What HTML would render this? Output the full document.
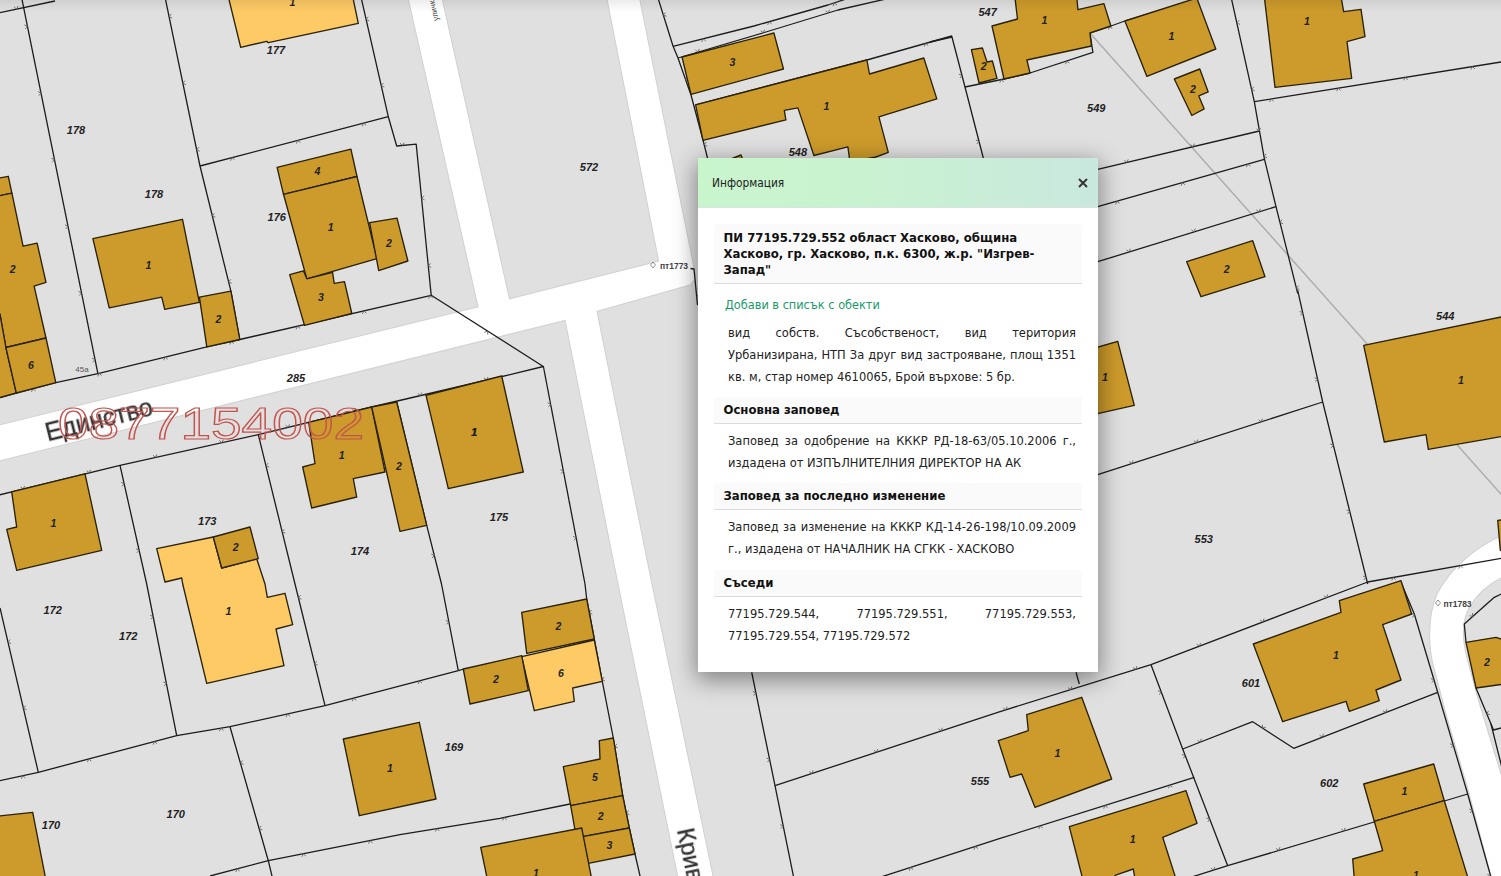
<!DOCTYPE html>
<html lang="bg">
<head>
<meta charset="utf-8">
<title>Кадастрална карта</title>
<style>
html,body{margin:0;padding:0;background:#e0e0e0;}
body{width:1501px;height:876px;overflow:hidden;position:relative;font-family:"DejaVu Sans Condensed","DejaVu Sans","Liberation Sans",sans-serif;font-stretch:condensed;}
#map{position:absolute;left:0;top:0;width:1501px;height:876px;display:block;}
#map text{font-family:"Liberation Sans",sans-serif;}
.lbl{font-weight:bold;font-style:italic;font-size:11px;fill:#222;text-anchor:middle;}
.bn{font-weight:bold;font-style:italic;font-size:10.5px;fill:#222;text-anchor:middle;}
.ln{fill:none;stroke:#1c1c1c;stroke-width:1.3;stroke-linejoin:round;}
.bd{fill:#cd9b2b;stroke:#2a2208;stroke-width:1.35;stroke-linejoin:round;}
.bl{fill:#fdca65;stroke:#2a2208;stroke-width:1.35;stroke-linejoin:round;}
.tk{fill:none;stroke:#666;stroke-width:0.9;}
.gl{fill:none;stroke:#adadad;stroke-width:1.5;}
#topshade{position:absolute;left:0;top:0;width:1501px;height:12px;background:linear-gradient(to bottom,rgba(0,0,0,0.075),rgba(0,0,0,0));}
#win{position:absolute;left:698px;top:158px;width:400px;height:514px;background:#fff;box-shadow:0 6px 22px 2px rgba(0,0,0,0.42);}
#hd{position:absolute;left:0;top:0;width:400px;height:50px;background:linear-gradient(to right,#c9f5cd 0%,#c9f3cf 35%,#c9e8de 100%);border-bottom:1px solid #d5e6dc;box-sizing:border-box;}
#hd .t{position:absolute;left:14px;top:17px;font-size:11.8px;line-height:16px;color:#222;}
#hd .x{position:absolute;left:379px;top:19px;width:12px;height:12px;}
.sh{position:absolute;left:16px;width:368px;box-sizing:border-box;background:#fafafa;border-bottom:1px solid #dcdcdc;border-radius:3px 3px 0 0;font-weight:bold;font-size:13px;color:#111;padding-left:9.5px;}
.p{position:absolute;left:30px;width:348px;font-size:12.75px;line-height:22px;color:#222;white-space:nowrap;}
.p div{height:22px;}
.p .j{text-align:justify;text-align-last:justify;}
#lnk{position:absolute;left:27px;top:139px;font-size:12.6px;line-height:16px;color:#1a9a6b;white-space:nowrap;}
</style>
</head>
<body>
<svg id="map" width="1501" height="876" viewBox="0 0 1501 876">
<defs>
<filter id="soft" x="-5%" y="-5%" width="110%" height="110%"><feGaussianBlur stdDeviation="0.55"/></filter>
</defs>
<rect x="0" y="0" width="1501" height="876" fill="#e0e0e0"/>
<!-- roads -->
<g id="roads" fill="#ffffff" stroke="#d2d2d2" stroke-width="1.1" filter="url(#soft)">
<polygon points="408,-2 442,-2 509.5,298.8 658.6,261.1 606.7,-2 639.5,-2 695.3,274 694.5,280 690,285 597,311.5 652,584 713.5,878 678,878 618,584 565,320.5 -2,461.2 -2,425.2 478,306.8"/>
<path d="M1503,535 C1476,547 1450,568 1437,594 C1427,617 1428,650 1435,672 L1447,718 L1467,786 L1491.5,878 L1510,878 L1510,780 L1501,774 L1479,702 L1467,658 C1461,634 1463,620 1469,608 C1477,594 1488,584 1503,577 Z"/>
</g>
<g id="glines" filter="url(#soft)"><polyline class="gl" points="1089.9,33.0 1505.0,498.5"/></g>
<g id="lines"><polyline class="ln" points="0.0,12.7 55.0,1.0"/>
<polyline class="ln" points="21.5,-3.0 97.9,373.6"/>
<polyline class="ln" points="165.0,-3.0 200.0,166.0 230.9,291.2 239.8,339.5"/>
<polyline class="ln" points="200.0,166.0 388.3,116.7"/>
<polyline class="ln" points="361.0,-3.0 388.3,116.7 396.7,146.0 416.2,144.2 431.2,295.3"/>
<polyline class="ln" points="-2.0,398.0 55.8,382.6 97.9,373.6 206.8,346.9 239.8,339.5 431.2,295.3 543.3,366.5"/>
<polyline class="ln" points="-2.0,495.2 120.0,465.3 258.3,434.7 371.7,407.0 500.0,377.0 543.3,366.5"/>
<polyline class="ln" points="543.3,366.0 585.0,584.0"/>
<polyline class="ln" points="585.0,584.0 586.7,599.0 594.3,639.0 602.3,681.3 613.3,738.0 622.7,795.7 629.3,828.0 635.0,854.0 640.7,879.0"/>
<polyline class="ln" points="120.0,465.3 146.7,584.0 176.7,735.7"/>
<polyline class="ln" points="258.3,434.7 295.0,584.0 325.0,705.7"/>
<polyline class="ln" points="396.7,402.0 426.7,525.3 441.5,584.0 458.3,670.7"/>
<polyline class="ln" points="0.0,608.0 38.3,772.3"/>
<polyline class="ln" points="-1.7,781.0 38.3,772.3 176.7,735.7 230.0,726.7 325.0,705.7 458.3,670.7 464.0,669.0"/>
<polyline class="ln" points="230.0,726.7 268.3,860.7 272.7,879.0"/>
<polyline class="ln" points="210.0,876.0 268.3,860.7 400.0,834.7 500.0,818.3 570.0,804.0"/>
<polyline class="ln" points="658.0,-2.0 673.0,46.0 678.0,58.0 691.0,95.0 703.0,140.0 708.0,160.0"/>
<polyline class="ln" points="673.0,46.4 754.0,26.0 827.9,5.0 846.0,-1.0"/>
<polyline class="ln" points="678.0,58.0 765.9,32.0 837.9,10.0 885.9,-1.0"/>
<polyline class="ln" points="695.6,104.9 866.9,60.0 951.7,36.0 965.0,87.0 983.3,158.0"/>
<polyline class="ln" points="930.0,42.0 952.0,37.0"/>
<polyline class="ln" points="965.0,87.0 1004.0,79.0 1030.0,73.0 1092.9,52.4 1089.9,33.0 1110.9,26.0 1124.9,21.0 1196.8,-1.0"/>
<polyline class="ln" points="1231.0,-3.3 1254.3,101.7 1264.3,158.3 1276.0,206.7 1297.7,293.3"/>
<polyline class="ln" points="1254.3,101.7 1502.7,61.7"/>
<polyline class="ln" points="1097.7,169.3 1259.3,131.0"/>
<polyline class="ln" points="1097.7,206.7 1264.3,159.3"/>
<polyline class="ln" points="1097.7,261.7 1276.0,206.7"/>
<polyline class="ln" points="1297.7,290.3 1322.7,402.0 1367.7,584.0"/>
<polyline class="ln" points="1097.7,474.7 1322.7,402.0"/>
<polyline class="ln" points="1367.7,582.0 1502.7,558.0"/>
<polyline class="ln" points="775.0,785.7 999.3,711.8 1151.0,664.7 1367.7,582.0"/>
<polyline class="ln" points="1151.0,664.7 1182.7,749.0 1227.7,865.7"/>
<polyline class="ln" points="1182.7,749.0 1252.7,721.7 1293.7,748.3 1437.7,692.3"/>
<polyline class="ln" points="880.0,877.3 999.3,838.7 1194.3,777.3"/>
<polyline class="ln" points="1192.7,876.7 1227.7,865.7 1467.7,794.0"/>
<polyline class="ln" points="1401.0,582.3 1414.3,614.0 1437.7,692.3 1467.7,794.0 1491.0,877.3"/>
<polyline class="ln" points="1076.0,672.3 1079.3,684.0"/>
<polyline class="ln" points="1502.7,593.3 1494.3,597.3 1464.3,624.0 1466.0,642.3"/>
<polyline class="ln" points="1476.0,688.0 1491.0,724.0 1502.7,770.7"/>
<polyline class="ln" points="1491.0,724.0 1493.5,730.0 1503.0,727.5"/>
<polyline class="ln" points="690.5,268.5 694.0,269.0 697.5,305.0"/>
<polyline class="ln" points="751.7,672.3 775.0,785.7 794.0,879.0"/></g>
<g id="ticks"><path class="tk" d="M16.6,9.1 L18.1,6.1 M16.6,9.1 L14.1,6.9"/>
<path class="tk" d="M27.5,26.4 L25.2,28.9 M27.5,26.4 L24.4,24.9 M41.0,93.0 L38.7,95.6 M41.0,93.0 L37.9,91.6 M54.5,159.7 L52.2,162.2 M54.5,159.7 L51.4,158.2 M68.0,226.3 L65.8,228.9 M68.0,226.3 L65.0,224.9 M81.5,293.0 L79.3,295.5 M81.5,293.0 L78.5,291.5 M95.1,359.6 L92.8,362.2 M95.1,359.6 L92.0,358.2"/>
<path class="tk" d="M169.1,16.6 L172.1,18.0 M169.1,16.6 L171.3,14.0 M182.8,83.2 L185.9,84.6 M182.8,83.2 L185.1,80.6 M196.6,149.8 L199.7,151.2 M196.6,149.8 L198.9,147.2 M212.3,215.9 L215.4,217.2 M212.3,215.9 L214.5,213.3 M228.6,281.9 L231.7,283.3 M228.6,281.9 L230.8,279.3"/>
<path class="tk" d="M231.9,157.6 L234.6,159.8 M231.9,157.6 L230.6,160.8 M297.7,140.4 L300.4,142.5 M297.7,140.4 L296.4,143.6 M363.5,123.2 L366.2,125.3 M363.5,123.2 L362.2,126.3"/>
<path class="tk" d="M366.1,19.4 L369.2,20.8 M366.1,19.4 L368.3,16.8 M381.2,85.7 L384.3,87.1 M381.2,85.7 L383.4,83.1 M402.4,145.5 L404.2,142.6 M402.4,145.5 L400.1,143.0 M421.6,198.1 L424.5,199.9 M421.6,198.1 L424.1,195.8 M428.3,265.8 L431.2,267.5 M428.3,265.8 L430.8,263.5"/>
<path class="tk" d="M32.8,388.7 L35.5,390.8 M32.8,388.7 L31.5,391.9 M99.0,373.3 L101.6,375.5 M99.0,373.3 L97.7,376.5 M165.0,357.1 L167.7,359.3 M165.0,357.1 L163.7,360.3 M231.2,341.4 L233.8,343.6 M231.2,341.4 L229.8,344.5 M297.5,326.2 L300.1,328.4 M297.5,326.2 L296.1,329.3 M363.7,310.9 L366.3,313.1 M363.7,310.9 L362.4,314.0 M430.0,295.6 L432.6,297.8 M430.0,295.6 L428.6,298.7 M487.5,331.1 L487.8,334.5 M487.5,331.1 L484.4,332.3"/>
<path class="tk" d="M23.3,489.0 L24.6,485.9 M23.3,489.0 L20.6,486.9 M89.3,472.8 L90.6,469.7 M89.3,472.8 L86.7,470.7 M155.5,457.4 L156.9,454.3 M155.5,457.4 L153.0,455.2 M221.9,442.7 L223.3,439.7 M221.9,442.7 L219.3,440.5 M288.2,427.4 L289.5,424.3 M288.2,427.4 L285.5,425.2 M354.2,411.3 L355.6,408.1 M354.2,411.3 L351.6,409.1 M420.4,395.6 L421.8,392.5 M420.4,395.6 L417.8,393.4 M486.6,380.1 L488.0,377.0 M486.6,380.1 L484.0,377.9"/>
<path class="tk" d="M550.7,404.3 L548.4,406.8 M550.7,404.3 L547.6,402.8 M563.4,471.1 L561.1,473.6 M563.4,471.1 L560.4,469.6 M576.2,537.9 L573.9,540.4 M576.2,537.9 L573.1,536.4"/>
<path class="tk" d="M589.3,612.7 L592.3,614.2 M589.3,612.7 L591.6,610.1 M602.0,679.5 L605.0,681.0 M602.0,679.5 L604.3,677.0 M614.7,746.3 L617.7,747.8 M614.7,746.3 L617.0,743.8 M626.3,813.3 L629.4,814.7 M626.3,813.3 L628.5,810.7"/>
<path class="tk" d="M124.2,483.8 L122.0,486.4 M124.2,483.8 L121.1,482.4 M139.1,550.2 L136.9,552.8 M139.1,550.2 L136.0,548.8 M153.2,616.7 L150.9,619.2 M153.2,616.7 L150.1,615.2 M166.4,683.4 L164.1,685.9 M166.4,683.4 L163.3,681.9"/>
<path class="tk" d="M265.9,465.8 L269.1,467.1 M265.9,465.8 L268.1,463.1 M282.2,531.8 L285.3,533.1 M282.2,531.8 L284.3,529.2 M298.4,597.8 L301.5,599.2 M298.4,597.8 L300.6,595.2 M314.7,663.9 L317.8,665.2 M314.7,663.9 L316.8,661.2"/>
<path class="tk" d="M401.9,423.4 L399.7,426.0 M401.9,423.4 L398.8,422.0 M418.0,489.4 L415.8,492.1 M418.0,489.4 L414.9,488.1 M434.3,555.5 L432.2,558.1 M434.3,555.5 L431.2,554.1 M448.8,621.9 L446.6,624.4 M448.8,621.9 L445.8,620.4"/>
<path class="tk" d="M8.0,642.1 L11.1,643.5 M8.0,642.1 L10.1,639.5 M23.4,708.3 L26.5,709.7 M23.4,708.3 L25.6,705.7"/>
<path class="tk" d="M22.8,775.7 L25.3,777.9 M22.8,775.7 L21.3,778.8 M88.7,759.0 L91.3,761.1 M88.7,759.0 L87.4,762.1 M154.4,741.6 L157.1,743.7 M154.4,741.6 L153.1,744.7 M221.0,728.2 L223.5,730.5 M221.0,728.2 L219.4,731.2 M287.5,714.0 L290.1,716.2 M287.5,714.0 L286.1,717.1 M353.6,698.2 L356.3,700.3 M353.6,698.2 L352.3,701.3 M419.4,680.9 L422.0,683.0 M419.4,680.9 L418.1,684.0"/>
<path class="tk" d="M240.5,763.2 L243.6,764.4 M240.5,763.2 L242.5,760.5 M259.2,828.6 L262.3,829.8 M259.2,828.6 L261.2,825.9"/>
<path class="tk" d="M237.1,868.9 L239.7,871.0 M237.1,868.9 L235.8,872.0 M303.3,853.8 L305.9,856.1 M303.3,853.8 L301.9,856.8 M370.1,840.6 L372.6,842.9 M370.1,840.6 L368.6,843.7 M437.0,828.6 L439.4,831.0 M437.0,828.6 L435.4,831.6 M504.1,817.5 L506.6,819.7 M504.1,817.5 L502.6,820.5"/>
<path class="tk" d="M663.4,15.2 L666.6,16.3 M663.4,15.2 L665.4,12.4 M685.5,79.4 L688.8,80.4 M685.5,79.4 L687.4,76.6 M704.2,144.8 L707.3,146.1 M704.2,144.8 L706.3,142.1"/>
<path class="tk" d="M703.1,38.8 L705.7,41.0 M703.1,38.8 L701.7,42.0 M768.9,21.8 L771.6,23.8 M768.9,21.8 L767.7,24.9 M834.2,2.9 L837.0,4.8 M834.2,2.9 L833.1,6.1"/>
<path class="tk" d="M698.1,52.0 L699.3,48.9 M698.1,52.0 L695.4,50.0 M763.3,32.8 L764.5,29.6 M763.3,32.8 L760.6,30.7 M828.4,12.9 L829.5,9.7 M828.4,12.9 L825.6,10.9"/>
<path class="tk" d="M728.5,96.3 L731.2,98.4 M728.5,96.3 L727.2,99.4 M794.3,79.0 L796.9,81.2 M794.3,79.0 L793.0,82.2 M860.0,61.8 L862.7,63.9 M860.0,61.8 L858.8,64.9 M925.5,43.4 L928.2,45.5 M925.5,43.4 L924.3,46.6 M962.0,75.5 L959.9,78.1 M962.0,75.5 L958.8,74.2 M979.0,141.3 L976.9,144.0 M979.0,141.3 L975.9,140.0"/>
<path class="tk" d="M1001.2,79.6 L1003.8,81.8 M1001.2,79.6 L999.8,82.6 M1066.6,61.0 L1069.4,63.0 M1066.6,61.0 L1065.5,64.2 M1109.5,26.5 L1112.3,28.4 M1109.5,26.5 L1108.4,29.7 M1174.3,5.9 L1177.1,7.9 M1174.3,5.9 L1173.2,9.1"/>
<path class="tk" d="M1236.9,23.0 L1240.0,24.4 M1236.9,23.0 L1239.1,20.4 M1251.6,89.4 L1254.7,90.8 M1251.6,89.4 L1253.8,86.8 M1264.0,156.3 L1267.0,157.8 M1264.0,156.3 L1266.3,153.8 M1279.9,222.4 L1283.1,223.7 M1279.9,222.4 L1282.1,219.7 M1296.4,288.3 L1299.5,289.6 M1296.4,288.3 L1298.6,285.7"/>
<path class="tk" d="M1271.1,99.0 L1273.6,101.3 M1271.1,99.0 L1269.5,102.0 M1338.3,88.1 L1340.7,90.5 M1338.3,88.1 L1336.7,91.2 M1405.4,77.3 L1407.8,79.7 M1405.4,77.3 L1403.8,80.3 M1472.5,66.5 L1475.0,68.9 M1472.5,66.5 L1470.9,69.5"/>
<path class="tk" d="M1126.9,162.4 L1128.2,159.3 M1126.9,162.4 L1124.2,160.2 M1193.0,146.7 L1194.4,143.6 M1193.0,146.7 L1190.4,144.5 M1259.2,131.0 L1260.5,127.9 M1259.2,131.0 L1256.6,128.9"/>
<path class="tk" d="M1116.9,201.2 L1119.6,203.3 M1116.9,201.2 L1115.7,204.4 M1182.3,182.6 L1185.0,184.7 M1182.3,182.6 L1181.1,185.8 M1247.7,164.0 L1250.4,166.1 M1247.7,164.0 L1246.5,167.2"/>
<path class="tk" d="M1129.2,251.9 L1130.3,248.7 M1129.2,251.9 L1126.4,249.9 M1194.2,231.9 L1195.3,228.7 M1194.2,231.9 L1191.4,229.9 M1259.2,211.9 L1260.3,208.7 M1259.2,211.9 L1256.4,209.9"/>
<path class="tk" d="M1302.7,312.8 L1300.5,315.4 M1302.7,312.8 L1299.6,311.4 M1317.5,379.1 L1315.3,381.7 M1317.5,379.1 L1314.4,377.7 M1333.4,445.3 L1331.2,447.9 M1333.4,445.3 L1330.2,443.9 M1349.7,511.3 L1347.5,513.9 M1349.7,511.3 L1346.6,510.0 M1366.0,577.3 L1363.9,579.9 M1366.0,577.3 L1362.9,576.0"/>
<path class="tk" d="M1131.9,463.6 L1133.0,460.4 M1131.9,463.6 L1129.1,461.6 M1196.6,442.7 L1197.7,439.5 M1196.6,442.7 L1193.9,440.7 M1261.3,421.8 L1262.4,418.6 M1261.3,421.8 L1258.6,419.8"/>
<path class="tk" d="M1393.3,577.4 L1395.7,579.8 M1393.3,577.4 L1391.7,580.5 M1460.2,565.5 L1462.7,567.9 M1460.2,565.5 L1458.7,568.6"/>
<path class="tk" d="M812.0,773.5 L813.1,770.3 M812.0,773.5 L809.3,771.6 M876.6,752.2 L877.7,749.0 M876.6,752.2 L873.8,750.3 M941.2,730.9 L942.3,727.7 M941.2,730.9 L938.4,729.0 M1005.8,709.8 L1007.0,706.6 M1005.8,709.8 L1003.1,707.8 M1070.8,689.6 L1071.9,686.4 M1070.8,689.6 L1068.0,687.6 M1135.7,669.4 L1136.9,666.2 M1135.7,669.4 L1133.0,667.5 M1199.6,646.2 L1200.5,642.9 M1199.6,646.2 L1196.7,644.3 M1263.1,621.9 L1264.0,618.6 M1263.1,621.9 L1260.2,620.1 M1326.6,597.7 L1327.6,594.4 M1326.6,597.7 L1323.8,595.9"/>
<path class="tk" d="M1161.2,691.8 L1159.4,694.7 M1161.2,691.8 L1157.9,690.9 M1185.2,755.5 L1183.4,758.3 M1185.2,755.5 L1181.9,754.5 M1209.6,818.9 L1207.8,821.8 M1209.6,818.9 L1206.4,818.0"/>
<path class="tk" d="M1200.4,742.1 L1201.3,738.8 M1200.4,742.1 L1197.5,740.3 M1262.6,728.1 L1265.8,727.0 M1262.6,728.1 L1262.4,724.7 M1322.5,737.1 L1323.4,733.8 M1322.5,737.1 L1319.6,735.3 M1385.9,712.5 L1386.8,709.2 M1385.9,712.5 L1383.0,710.7"/>
<path class="tk" d="M910.4,867.4 L913.2,869.4 M910.4,867.4 L909.3,870.7 M975.1,846.5 L977.9,848.5 M975.1,846.5 L974.0,849.7 M1039.9,825.9 L1042.7,827.9 M1039.9,825.9 L1038.8,829.1 M1104.8,805.5 L1107.6,807.5 M1104.8,805.5 L1103.7,808.7 M1169.7,785.1 L1172.4,787.0 M1169.7,785.1 L1168.5,788.3"/>
<path class="tk" d="M1213.7,870.1 L1214.8,866.9 M1213.7,870.1 L1210.9,868.1 M1278.7,850.4 L1279.9,847.2 M1278.7,850.4 L1276.0,848.4 M1343.9,831.0 L1345.1,827.8 M1343.9,831.0 L1341.2,828.9 M1409.1,811.5 L1410.2,808.3 M1409.1,811.5 L1406.3,809.5"/>
<path class="tk" d="M1414.5,614.6 L1412.5,617.3 M1414.5,614.6 L1411.3,613.4 M1433.9,679.8 L1431.9,682.5 M1433.9,679.8 L1430.7,678.6 M1453.2,745.0 L1451.2,747.7 M1453.2,745.0 L1450.0,743.8 M1472.2,810.3 L1470.2,813.0 M1472.2,810.3 L1469.1,809.0 M1490.6,875.8 L1488.5,878.5 M1490.6,875.8 L1487.4,874.5"/>
<path class="tk" d="M1472.8,616.4 L1469.5,615.8 M1472.8,616.4 L1472.6,613.0"/>
<path class="tk" d="M1486.8,713.8 L1490.1,714.7 M1486.8,713.8 L1488.5,710.9"/>
<path class="tk" d="M696.7,296.3 L699.6,298.1 M696.7,296.3 L699.2,294.0"/>
<path class="tk" d="M755.9,692.9 L753.6,695.4 M755.9,692.9 L752.8,691.5 M769.6,759.5 L767.4,762.1 M769.6,759.5 L766.5,758.1 M783.2,826.1 L781.0,828.7 M783.2,826.1 L780.2,824.7"/></g>
<g id="bldg"><polygon class="bl" points="228.3,-3.3 352.7,-3.3 358.3,23.3 268.3,42.7 266.7,41.3 240.7,47.3"/>
<polygon class="bd" points="277.1,167.4 350.9,149.1 357.0,176.5 283.5,194.3"/>
<polygon class="bd" points="283.5,194.3 357.0,176.5 376.9,258.7 306.8,278.8"/>
<polygon class="bd" points="369.6,222.6 397.0,218.1 407.9,261.0 378.7,270.6"/>
<polygon class="bd" points="289.7,274.7 303.4,270.8 306.8,278.8 332.6,272.4 334.2,283.4 344.5,281.6 351.8,313.5 304.5,325.4"/>
<polygon class="bd" points="-3.0,178.4 8.3,176.3 11.9,193.2 -3.0,196.2"/>
<polygon class="bd" points="-3.0,196.2 11.9,193.2 23.1,246.1 37.1,243.1 46.0,282.3 34.1,286.1 46.0,338.0 5.9,347.5 0.0,314.3 -3.0,314.9"/>
<polygon class="bd" points="-3.0,314.9 0.0,314.3 5.9,347.5 16.3,392.9 -3.0,398.3"/>
<polygon class="bd" points="5.9,347.5 46.0,338.0 55.8,382.6 16.3,392.9"/>
<polygon class="bd" points="92.9,238.6 182.5,219.3 199.4,302.4 164.7,309.3 161.7,297.1 109.2,307.8"/>
<polygon class="bd" points="199.4,297.1 230.9,291.2 239.8,339.5 206.8,346.9"/>
<polygon class="bd" points="11.7,491.8 85.0,473.9 101.7,550.3 16.7,570.3 6.7,529.3 16.7,527.0"/>
<polygon class="bd" points="308.7,422.3 371.7,407.0 385.0,472.0 353.3,478.7 356.7,497.0 311.7,508.0 302.7,467.0 315.0,463.7"/>
<polygon class="bd" points="371.7,407.0 396.7,402.0 426.7,525.3 400.0,531.3"/>
<polygon class="bd" points="426.0,395.3 501.7,376.0 523.3,472.0 448.3,488.7"/>
<polygon class="bl" points="156.7,548.7 213.3,537.0 221.7,568.0 256.7,558.7 265.0,584.0 267.3,597.3 285.0,593.3 292.7,624.7 276.0,629.0 284.0,665.7 206.7,683.3 182.7,584.0 181.7,578.0 165.0,582.0"/>
<polygon class="bd" points="213.3,537.0 250.0,527.0 258.3,558.7 221.7,568.0"/>
<polygon class="bd" points="343.3,739.0 419.3,722.3 436.0,799.0 359.3,815.7"/>
<polygon class="bd" points="-3.3,816.3 32.7,812.3 45.7,879.0 -3.3,879.0"/>
<polygon class="bd" points="521.7,612.3 586.7,599.0 594.3,639.0 526.7,653.3"/>
<polygon class="bl" points="521.7,656.7 594.3,640.0 602.3,681.3 572.7,688.0 574.3,701.3 534.3,710.7"/>
<polygon class="bd" points="463.3,669.0 521.7,655.7 528.3,690.7 470.0,704.0"/>
<polygon class="bd" points="563.3,766.7 600.0,759.0 599.3,740.7 613.3,738.0 622.7,795.7 570.7,805.7"/>
<polygon class="bd" points="570.7,805.7 622.7,795.7 629.3,828.0 582.7,836.7 581.7,829.0 575.0,830.0"/>
<polygon class="bd" points="582.7,836.7 629.3,828.0 635.0,854.0 588.3,863.3"/>
<polygon class="bd" points="480.7,847.3 581.7,828.0 591.7,879.0 487.3,879.0"/>
<polygon class="bd" points="682.0,57.0 773.9,33.0 783.5,69.0 691.0,94.3"/>
<polygon class="bd" points="695.6,104.9 866.9,60.0 869.5,74.0 923.8,58.0 936.8,98.9 878.9,116.9 888.3,152.3 876.0,157.0 849.9,162.0 847.9,146.9 813.9,155.5 797.9,107.9 784.3,110.3 785.9,119.9 703.0,140.3"/>
<polygon class="bd" points="731.0,159.0 741.0,155.0 743.0,160.0"/>
<polygon class="bd" points="992.0,26.0 1017.5,19.0 1015.0,-2.0 1076.9,-2.0 1077.9,9.6 1103.9,3.6 1110.9,26.0 1089.9,33.0 1091.5,46.0 1026.9,60.0 1030.0,73.0 1004.0,79.0"/>
<polygon class="bd" points="971.4,49.6 982.4,48.0 987.0,62.0 992.4,61.0 997.0,78.4 979.0,83.0"/>
<polygon class="bd" points="1124.9,21.0 1196.8,-2.0 1215.8,49.0 1146.9,76.4"/>
<polygon class="bd" points="1174.3,79.0 1199.8,69.0 1208.2,91.9 1198.8,95.9 1204.2,108.9 1191.8,115.5"/>
<polygon class="bd" points="1264.3,-3.3 1341.0,-3.3 1343.7,11.7 1361.0,9.3 1365.0,36.7 1347.0,41.7 1351.7,78.3 1275.0,87.3"/>
<polygon class="bd" points="1186.7,261.7 1252.7,240.7 1265.0,276.7 1201.0,296.7"/>
<polygon class="bd" points="1081.0,352.0 1117.7,341.3 1134.3,405.3 1097.7,413.7"/>
<polygon class="bd" points="1363.7,345.3 1504.3,316.3 1504.3,436.0 1428.3,449.3 1426.0,434.7 1384.3,442.0"/>
<polygon class="bd" points="1497.7,520.3 1504.3,519.7 1504.3,551.3 1500.3,550.3"/>
<polygon class="bd" points="1253.3,644.0 1341.0,612.3 1339.3,600.7 1401.0,580.7 1411.7,614.0 1382.7,624.7 1401.0,680.0 1376.0,690.0 1379.3,700.7 1349.3,711.3 1346.0,701.3 1282.7,721.7"/>
<polygon class="bd" points="1069.3,826.7 1186.0,790.7 1197.0,823.3 1162.7,837.3 1176.0,879.0 1135.0,879.0 1133.3,869.0 1115.0,875.3 1116.0,879.0 1082.7,879.0"/>
<polygon class="bd" points="1363.7,784.0 1433.7,764.0 1444.3,800.7 1374.3,821.3"/>
<polygon class="bd" points="1374.3,821.3 1444.3,800.7 1468.3,879.0 1354.3,879.0 1352.7,859.0 1382.7,850.7"/>
<polygon class="bd" points="1466.0,642.3 1496.0,637.3 1504.3,640.0 1504.3,684.0 1476.0,688.0"/>
<polygon class="bd" points="998.3,740.7 1028.3,730.7 1026.7,714.7 1081.7,697.3 1111.7,779.0 1035.0,807.3 1021.7,774.0 1010.0,777.3"/></g>
<g id="labels"><text class="lbl" x="276.0" y="54.3">177</text>
<text class="lbl" x="76.0" y="133.7">178</text>
<text class="lbl" x="154.0" y="198.0">178</text>
<text class="lbl" x="276.7" y="221.0">176</text>
<text class="bn" x="317.3" y="175.0">4</text>
<text class="bn" x="330.7" y="231.0">1</text>
<text class="bn" x="389.0" y="247.3">2</text>
<text class="bn" x="148.3" y="269.3">1</text>
<text class="bn" x="12.7" y="272.7">2</text>
<text class="bn" x="292.3" y="6.0">1</text>
<text class="lbl" x="296.0" y="381.7">285</text>
<text class="lbl" x="207.3" y="525.0">173</text>
<text class="lbl" x="360.0" y="555.0">174</text>
<text class="bn" x="53.3" y="527.0">1</text>
<text class="bn" x="341.7" y="459.3">1</text>
<text class="bn" x="399.0" y="470.3">2</text>
<text class="bn" x="474.3" y="436.0">1</text>
<text class="bn" x="235.7" y="551.3">2</text>
<text class="bn" x="321.0" y="301.3">3</text>
<text class="bn" x="218.3" y="323.0">2</text>
<text class="bn" x="31.0" y="369.3">6</text>
<text class="lbl" x="52.7" y="613.7">172</text>
<text class="lbl" x="128.3" y="640.3">172</text>
<text class="lbl" x="454.0" y="751.0">169</text>
<text class="lbl" x="175.7" y="817.7">170</text>
<text class="lbl" x="51.0" y="828.7">170</text>
<text class="bn" x="228.3" y="614.7">1</text>
<text class="bn" x="390.0" y="772.3">1</text>
<text class="bn" x="558.3" y="629.7">2</text>
<text class="bn" x="561.0" y="676.7">6</text>
<text class="bn" x="496.0" y="683.3">2</text>
<text class="bn" x="595.0" y="780.7">5</text>
<text class="bn" x="600.7" y="819.7">2</text>
<text class="bn" x="609.3" y="849.0">3</text>
<text class="bn" x="536.0" y="876.7">1</text>
<text class="bn" x="474.0" y="436.0">1</text>
<text class="lbl" x="499.0" y="520.7">175</text>
<text class="lbl" x="589.0" y="171.3">572</text>
<text class="lbl" x="797.9" y="156.0">548</text>
<text class="bn" x="732.3" y="66.0">3</text>
<text class="bn" x="826.3" y="109.5">1</text>
<text class="lbl" x="987.6" y="16.0">547</text>
<text class="bn" x="1044.3" y="24.0">1</text>
<text class="bn" x="983.6" y="70.0">2</text>
<text class="lbl" x="1096.3" y="111.5">549</text>
<text class="bn" x="1171.3" y="39.5">1</text>
<text class="bn" x="1192.8" y="93.0">2</text>
<text class="bn" x="1307.0" y="25.0">1</text>
<text class="bn" x="1226.7" y="273.3">2</text>
<text class="lbl" x="1445.3" y="319.7">544</text>
<text class="bn" x="1461.0" y="383.7">1</text>
<text class="lbl" x="1203.7" y="543.3">553</text>
<text class="bn" x="1105.0" y="381.3">1</text>
<text class="lbl" x="1251.0" y="686.7">601</text>
<text class="lbl" x="1329.3" y="786.7">602</text>
<text class="bn" x="1336.0" y="659.0">1</text>
<text class="bn" x="1132.7" y="843.3">1</text>
<text class="bn" x="1404.3" y="794.7">1</text>
<text class="bn" x="1487.0" y="665.7">2</text>
<text class="lbl" x="980.0" y="785.3">555</text>
<text class="bn" x="1057.3" y="756.7">1</text>
<text class="bn" x="1416.0" y="879.3">1</text></g>
<g id="extras">
<text x="82" y="372" font-size="8" fill="#555" text-anchor="middle">45а</text>
<text x="674" y="269" font-size="8.5" font-weight="bold" fill="#444" text-anchor="middle">пт1773</text>
<path d="M653,262 l2.5,3 l-2.5,3 l-2.5,-3 z" fill="none" stroke="#777" stroke-width="0.8"/>
<text x="1457.5" y="606.5" font-size="8.5" font-weight="bold" fill="#444" text-anchor="middle">пт1783</text>
<path d="M1438,600 l2.5,3 l-2.5,3 l-2.5,-3 z" fill="none" stroke="#777" stroke-width="0.8"/>
<text transform="translate(101,428) rotate(-14)" font-size="25" fill="#333" stroke="#333" stroke-width="0.35" text-anchor="middle" filter="url(#soft)">Единство</text>
<text transform="translate(677,830) rotate(78)" font-size="24" fill="#333" stroke="#333" stroke-width="0.35" text-anchor="start" filter="url(#soft)">Крива</text>
<text transform="translate(436,8) rotate(-103)" font-size="8" fill="#444" text-anchor="middle">уличка</text>
<text x="58" y="439" font-size="44" textLength="306" lengthAdjust="spacingAndGlyphs" fill="none" stroke="#c4544e" stroke-width="1.2">0877154002</text>
</g>

</svg>
<div id="topshade"></div>
<div id="win">
 <div id="hd"><div class="t">Информация</div>
  <svg class="x" viewBox="0 0 12 12"><path d="M2,2 L10,10 M10,2 L2,10" stroke="#333" stroke-width="1.9" fill="none"/></svg>
 </div>
 <div class="sh" style="top:66px;height:60px;line-height:16px;padding-top:6px;">ПИ 77195.729.552 област Хасково, община<br>Хасково, гр. Хасково, п.к. 6300, ж.р. "Изгрев-<br>Запад"</div>
 <div id="lnk">Добави в списък с обекти</div>
 <div class="p" style="top:164px;"><div class="j">вид собств. Съсобственост, вид територия</div><div class="j">Урбанизирана, НТП За друг вид застрояване, площ 1351</div><div>кв. м, стар номер 4610065, Брой върхове: 5 бр.</div></div>
 <div class="sh" style="top:239px;height:26.5px;line-height:26px;">Основна заповед</div>
 <div class="p" style="top:272px;"><div class="j">Заповед за одобрение на КККР РД-18-63/05.10.2006 г.,</div><div>издадена от ИЗПЪЛНИТЕЛНИЯ ДИРЕКТОР НА АК</div></div>
 <div class="sh" style="top:325px;height:26.5px;line-height:26px;">Заповед за последно изменение</div>
 <div class="p" style="top:358px;"><div class="j">Заповед за изменение на КККР КД-14-26-198/10.09.2009</div><div>г., издадена от НАЧАЛНИК НА СГКК - ХАСКОВО</div></div>
 <div class="sh" style="top:411.5px;height:27px;line-height:26px;">Съседи</div>
 <div class="p" style="top:445px;"><div class="j">77195.729.544, 77195.729.551, 77195.729.553,</div><div>77195.729.554, 77195.729.572</div></div>
</div>
</body>
</html>
